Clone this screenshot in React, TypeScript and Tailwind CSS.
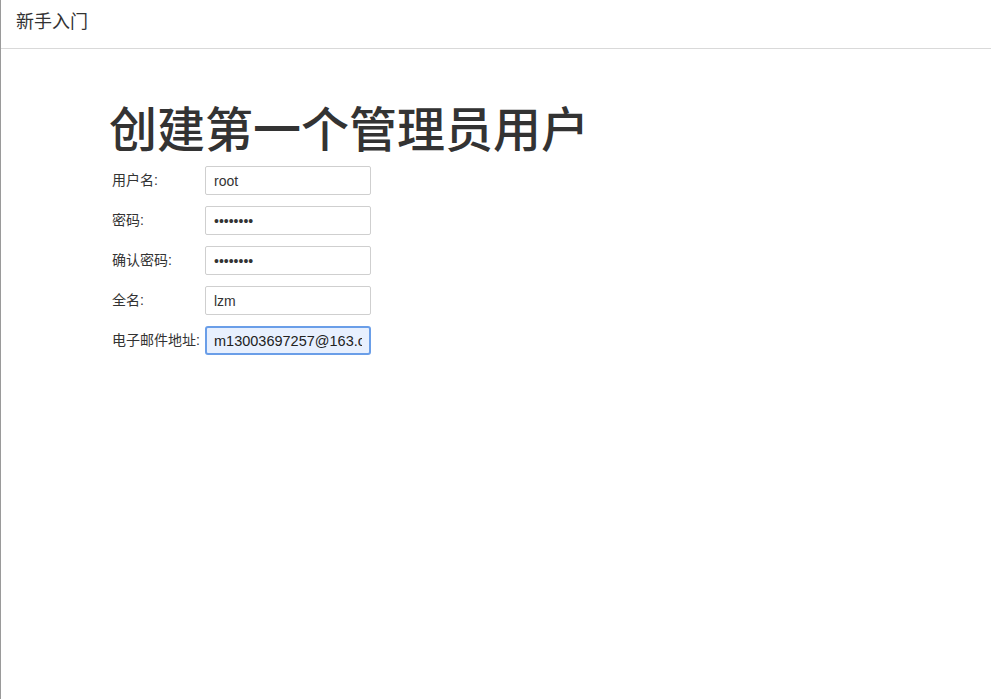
import { useState } from "react";

const FONT = '"Liberation Sans", "Noto Sans CJK SC", sans-serif';

export default function App() {
  const [form, setForm] = useState({
    username: "root",
    password: "12345678",
    confirm: "12345678",
    fullname: "lzm",
    email: "m13003697257@163.com",
  });

  const fields: { key: keyof typeof form; label: string; type: string }[] = [
    { key: "username", label: "用户名:", type: "text" },
    { key: "password", label: "密码:", type: "password" },
    { key: "confirm", label: "确认密码:", type: "password" },
    { key: "fullname", label: "全名:", type: "text" },
    { key: "email", label: "电子邮件地址:", type: "text" },
  ];

  return (
    <div className="min-h-[699px] bg-white border-l border-[#9a9a9a] text-[#333]" style={{ fontFamily: FONT }}>
      <header className="h-[49px] border-b border-[#d9d9d9] flex items-center px-[15px]">
        <span className="text-[18px] text-[#333] -mt-[4px]">新手入门</span>
      </header>
      <main className="pl-[108px] pt-[52px]">
        <h1 className="text-[48px] leading-[60px] font-medium text-[#333]">创建第一个管理员用户</h1>
        <div className="flex flex-col gap-[11px] mt-[5px] pl-[3px]">
          {fields.map((f) => {
            const focused = f.key === "email";
            return (
              <div key={f.key} className="flex items-center">
                <label className="w-[93px] text-[14px] text-[#333] whitespace-nowrap">{f.label}</label>
                <input
                  type={f.type}
                  value={form[f.key]}
                  onChange={(e) => setForm({ ...form, [f.key]: e.target.value })}
                  className={
                    focused
                      ? "w-[166px] h-[29px] px-[7px] text-[14.5px] text-[#222] bg-[#e8f0fe] border-2 border-[#6a9ee8] rounded-[3px] outline-none"
                      : "w-[166px] h-[29px] px-[8px] text-[14px] text-[#333] bg-white border border-[#cfcfcf] rounded-[2px] outline-none"
                  }
                  style={{ fontFamily: FONT }}
                />
              </div>
            );
          })}
        </div>
      </main>
    </div>
  );
}
